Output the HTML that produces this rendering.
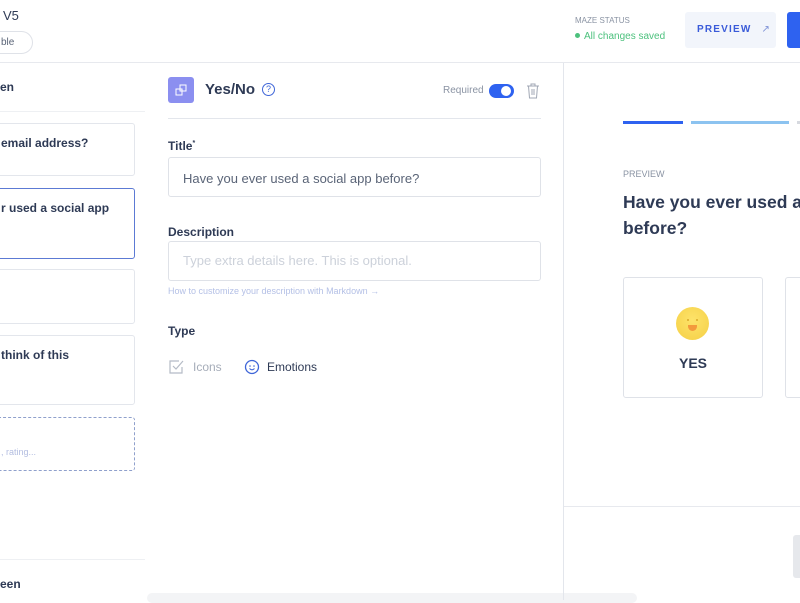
<!DOCTYPE html>
<html><head><meta charset="utf-8"><style>
*{box-sizing:border-box;margin:0;padding:0}
body{width:800px;height:600px;overflow:hidden;background:#fff;font-family:"Liberation Sans",sans-serif;color:#2e3a55;position:relative}
.a{position:absolute}
.card{position:absolute;left:-10px;width:145px;border:1px solid #e3e6ec;border-radius:3px;background:#fff;font-size:12px;font-weight:bold;color:#2e3a55;padding:12px 0 0 10px}
.lbl{font-size:12px;font-weight:bold;color:#2e3a55}
.inp{position:absolute;left:168px;width:373px;border:1px solid #dfe2e8;border-radius:3px;font-size:13px;padding-left:14px}
</style></head><body>
<div class="a" style="left:3px;top:8px;font-size:13px;color:#2e3a55">V5</div>
<div class="a" style="left:-20px;top:31px;width:53px;height:23px;border:1px solid #dfe2e8;border-radius:12px;font-size:10px;color:#5a6477;padding:5px 0 0 20px">ble</div>
<div class="a" style="left:575px;top:16px;font-size:8px;color:#8a93a3">MAZE STATUS</div>
<div class="a" style="left:575px;top:31px;font-size:10px;color:#4cc17d"><span style="display:inline-block;width:5px;height:5px;border-radius:50%;background:#4cc17d;margin-right:4px;vertical-align:1px"></span>All changes saved</div>
<div class="a" style="left:685px;top:12px;width:91px;height:36px;background:#f2f5fb;border-radius:3px;font-size:10px;font-weight:bold;letter-spacing:1.2px;color:#3a5bd9;padding:12px 0 0 12px">PREVIEW <span style="margin-left:6px;font-weight:normal;color:#7d90d6">↗</span></div>
<div class="a" style="left:787px;top:12px;width:20px;height:36px;background:#2e62f0;border-radius:3px"></div>
<div class="a" style="left:0;top:62px;width:800px;height:1px;background:#e7e9ee"></div>
<div class="a" style="left:0;top:80px;font-size:12px;font-weight:bold">en</div>
<div class="a" style="left:0;top:111px;width:145px;height:1px;background:#eef0f3"></div>
<div class="card" style="top:123px;height:53px">email address?</div>
<div class="card" style="top:188px;height:71px;border-color:#5c7ad4">r used a social app</div>
<div class="card" style="top:269px;height:55px"></div>
<div class="card" style="top:335px;height:70px">think of this</div>
<div class="card" style="top:417px;height:54px;border:1px dashed #8fa0cc;font-weight:normal;font-size:9px;color:#b3bde0;padding-top:29px">, rating...</div>
<div class="a" style="left:0;top:559px;width:145px;height:1px;background:#eef0f3"></div>
<div class="a" style="left:0;top:577px;font-size:12px;font-weight:bold">een</div>
<div class="a" style="left:168px;top:77px;width:26px;height:26px;background:#8b8ff0;border-radius:3px">
<svg width="26" height="26" viewBox="0 0 26 26"><rect x="8" y="12" width="6" height="6" fill="none" stroke="#fff" stroke-width="1"/><rect x="12" y="8" width="6" height="6" fill="none" stroke="#fff" stroke-width="1"/></svg></div>
<div class="a" style="left:205px;top:81px;font-size:15px;font-weight:bold">Yes/No</div>
<div class="a" style="left:262px;top:83px;width:13px;height:13px;border:1.3px solid #3f66d8;border-radius:50%;font-size:9px;color:#3f66d8;text-align:center;line-height:11px">?</div>
<div class="a" style="left:443px;top:85px;font-size:10px;color:#8a93a3">Required</div>
<div class="a" style="left:489px;top:84px;width:25px;height:14px;background:#2e62f0;border-radius:7px"><div class="a" style="left:12px;top:2px;width:10px;height:10px;background:#fff;border-radius:50%"></div></div>
<svg class="a" style="left:526px;top:83px" width="14" height="16" viewBox="0 0 14 16"><path d="M1 3h12M5 3V1h4v2M2.5 3l1 12h7l1-12M6 6v6M8 6v6" fill="none" stroke="#a0a7b4" stroke-width="1"/></svg>
<div class="a" style="left:168px;top:118px;width:373px;height:1px;background:#e3e6ec"></div>
<div class="a lbl" style="left:168px;top:139px">Title<sup style="font-size:7px">*</sup></div>
<div class="inp" style="top:157px;height:40px;padding-top:13px;color:#5a6477">Have you ever used a social app before?</div>
<div class="a lbl" style="left:168px;top:225px">Description</div>
<div class="inp" style="top:241px;height:40px;padding-top:11px;color:#ccd1da">Type extra details here. This is optional.</div>
<div class="a" style="left:168px;top:286px;font-size:9px;color:#b4c0e6">How to customize your description with Markdown →</div>
<div class="a lbl" style="left:168px;top:324px">Type</div>
<svg class="a" style="left:169px;top:359px" width="16" height="16" viewBox="0 0 16 16"><path d="M13 8v6H1V2h9" fill="none" stroke="#b5bbc6" stroke-width="1.2"/><path d="M4 7l3 3 7-8" fill="none" stroke="#b5bbc6" stroke-width="1.2"/></svg>
<div class="a" style="left:193px;top:360px;font-size:12px;color:#a6adb9">Icons</div>
<svg class="a" style="left:244px;top:359px" width="16" height="16" viewBox="0 0 16 16"><circle cx="8" cy="8" r="6.5" fill="none" stroke="#3f66d8" stroke-width="1.3"/><circle cx="6" cy="7" r=".8" fill="#3f66d8"/><circle cx="10" cy="7" r=".8" fill="#3f66d8"/><path d="M5.5 9.5q2.5 2.5 5 0" fill="none" stroke="#3f66d8" stroke-width="1.1"/></svg>
<div class="a" style="left:267px;top:360px;font-size:12px;color:#2e3a55">Emotions</div>
<div class="a" style="left:147px;top:593px;width:490px;height:10px;background:#f3f4f6;border-radius:6px"></div>
<div class="a" style="left:563px;top:63px;width:1px;height:537px;background:#e3e6ec"></div>
<div class="a" style="left:623px;top:121px;width:60px;height:3px;background:#2e62f0"></div>
<div class="a" style="left:691px;top:121px;width:98px;height:3px;background:#8cc3f0"></div>
<div class="a" style="left:797px;top:121px;width:10px;height:3px;background:#d6d9df"></div>
<div class="a" style="left:623px;top:169px;font-size:9px;color:#8a93a3">PREVIEW</div>
<div class="a" style="left:623px;top:189px;font-size:17.5px;font-weight:bold;line-height:26px;color:#2e3a55;width:200px">Have you ever used a before?</div>
<div class="a" style="left:623px;top:277px;width:140px;height:121px;border:1px solid #dfe2e8;border-radius:3px"></div>
<div class="a" style="left:676px;top:307px;width:33px;height:33px;border-radius:50%;background:radial-gradient(circle at 50% 40%,#fde36a,#f5cf45)"></div>
<div class="a" style="left:687px;top:319px;width:2px;height:2px;background:#d8a92a;border-radius:50%"></div>
<div class="a" style="left:696px;top:319px;width:2px;height:2px;background:#d8a92a;border-radius:50%"></div>
<div class="a" style="left:688px;top:325px;width:9px;height:6px;background:#f39a3c;border-radius:0 0 5px 5px"></div>
<div class="a" style="left:623px;top:355px;width:140px;text-align:center;font-size:14px;font-weight:bold">YES</div>
<div class="a" style="left:785px;top:277px;width:30px;height:121px;border:1px solid #dfe2e8;border-radius:3px"></div>
<div class="a" style="left:564px;top:506px;width:236px;height:1px;background:#e7e9ee"></div>
<div class="a" style="left:793px;top:535px;width:12px;height:43px;background:#e6e8ec;border-radius:3px"></div>
</body></html>
